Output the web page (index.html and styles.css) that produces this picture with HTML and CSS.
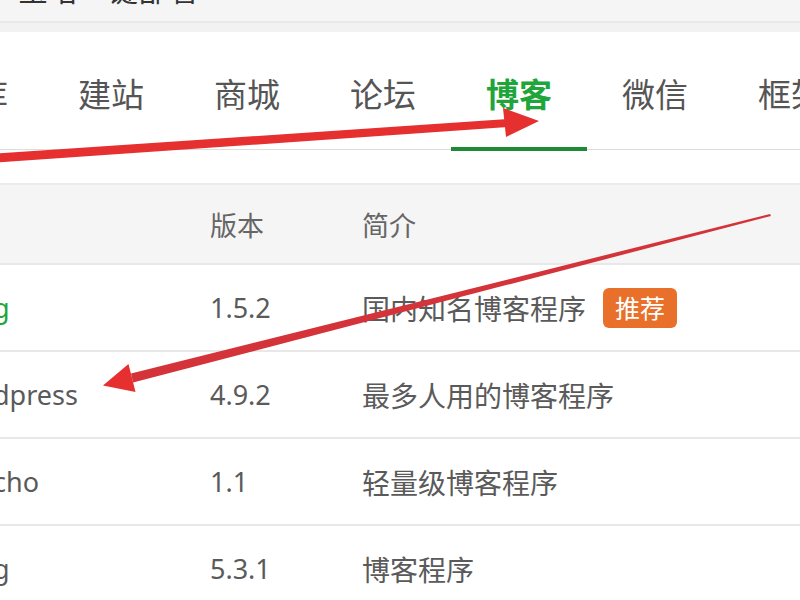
FILE: index.html
```html
<!DOCTYPE html>
<html lang="zh-CN">
<head>
<meta charset="utf-8">
<title>一键部署 - 博客</title>
<link rel="stylesheet" href="styles.css">
</head>
<body>
<div class="page">
  <div class="topbar"><div class="topbar-text">宝塔一键部署</div></div>
  <div class="band"></div>
  <nav class="tabs">
    <a class="tab">题库</a>
    <a class="tab">建站</a>
    <a class="tab">商城</a>
    <a class="tab">论坛</a>
    <a class="tab active">博客</a>
    <a class="tab">微信</a>
    <a class="tab">框架</a>
  </nav>
  <div class="gap"></div>
  <div class="list">
    <div class="row head">
      <div class="c-name"></div>
      <div class="c-ver">版本</div>
      <div class="c-desc">简介</div>
    </div>
    <div class="row">
      <div class="c-name link">g</div>
      <div class="c-ver">1.5.2</div>
      <div class="c-desc">国内知名博客程序<span class="badge">推荐</span></div>
    </div>
    <div class="row">
      <div class="c-name">dpress</div>
      <div class="c-ver">4.9.2</div>
      <div class="c-desc">最多人用的博客程序</div>
    </div>
    <div class="row">
      <div class="c-name">cho</div>
      <div class="c-ver">1.1</div>
      <div class="c-desc">轻量级博客程序</div>
    </div>
    <div class="row">
      <div class="c-name">g</div>
      <div class="c-ver">5.3.1</div>
      <div class="c-desc">博客程序</div>
    </div>
  </div>
  <svg class="annot" width="800" height="600" viewBox="0 0 800 600" aria-hidden="true">
    <polygon class="arrow" points="-10,154 508,119 508,127 -10,163"/>
    <polygon class="arrow" points="503,108 539,121 506,137"/>
    <polygon class="arrow thin" points="770,214 771,216 133,382.5 131,373.5"/>
    <polygon class="arrow" points="128.5,364 103,385.5 135.5,392"/>
  </svg>
</div>
</body>
</html>
```

FILE: styles.css
```css
* { box-sizing: border-box; }
html, body { margin: 0; padding: 0; background: #ffffff; }
body {
  font-family: "Noto Sans", "Noto Sans CJK SC", sans-serif;
  color: #555555;
  width: 800px;
  height: 600px;
  overflow: hidden;
}
.page { position: relative; width: 800px; height: 600px; overflow: hidden; }

.topbar {
  height: 23px;
  background: #f5f5f5;
  border-bottom: 2px solid #e9e9e9;
  overflow: hidden;
  padding-left: 18px;
}
.topbar-text {
  font-family: "Noto Sans CJK SC", sans-serif;
  font-size: 30px;
  line-height: 30px;
  margin-top: -27px;
  color: #333333;
  white-space: nowrap;
}
.band { height: 9px; background: #f2f2f2; }

.tabs {
  display: flex;
  margin-left: -93px;
  height: 118px;
  border-bottom: 1px solid #dddddd;
  width: 893px;
}
.tab {
  flex: 0 0 136px;
  height: 118px;
  padding-top: 41px;
  text-align: center;
  font-family: "Noto Sans CJK SC", sans-serif;
  font-size: 33px;
  line-height: 40px;
  color: #555555;
  white-space: nowrap;
}
.tab.active {
  color: #20a53a;
  font-weight: 700;
  border-bottom: 4px solid #1e8a35;
  margin-bottom: -1px;
  height: 119px;
}

.gap { height: 33px; }

.list { border-top: 2px solid #ececec; }
.row {
  display: grid;
  grid-template-columns: 210px 152px 1fr;
  align-items: center;
  height: 87px;
  border-bottom: 2px solid #e8e8e8;
  font-family: "Noto Sans", "Noto Sans CJK SC", sans-serif;
  font-size: 27px;
  color: #5a5a5a;
  white-space: nowrap;
}
.row .c-desc { font-size: 28px; }
.row.head {
  height: 80px;
  background: #f5f5f5;
  color: #666666;
}
.row.head .c-desc { font-size: 27px; }
.c-name { margin-left: -7px; }
.link { color: #20a53a; }
.c-desc { display: flex; align-items: center; }
.badge {
  display: inline-block;
  margin-left: 17px;
  background: #e8702a;
  color: #ffffff;
  font-size: 25px;
  line-height: 40px;
  height: 40px;
  width: 74px;
  text-align: center;
  border-radius: 6px;
}

.annot {
  position: absolute;
  top: 0;
  left: 0;
  pointer-events: none;
}
.arrow { fill: #e5302f; }
.arrow.thin { fill: #d33339; }
```
